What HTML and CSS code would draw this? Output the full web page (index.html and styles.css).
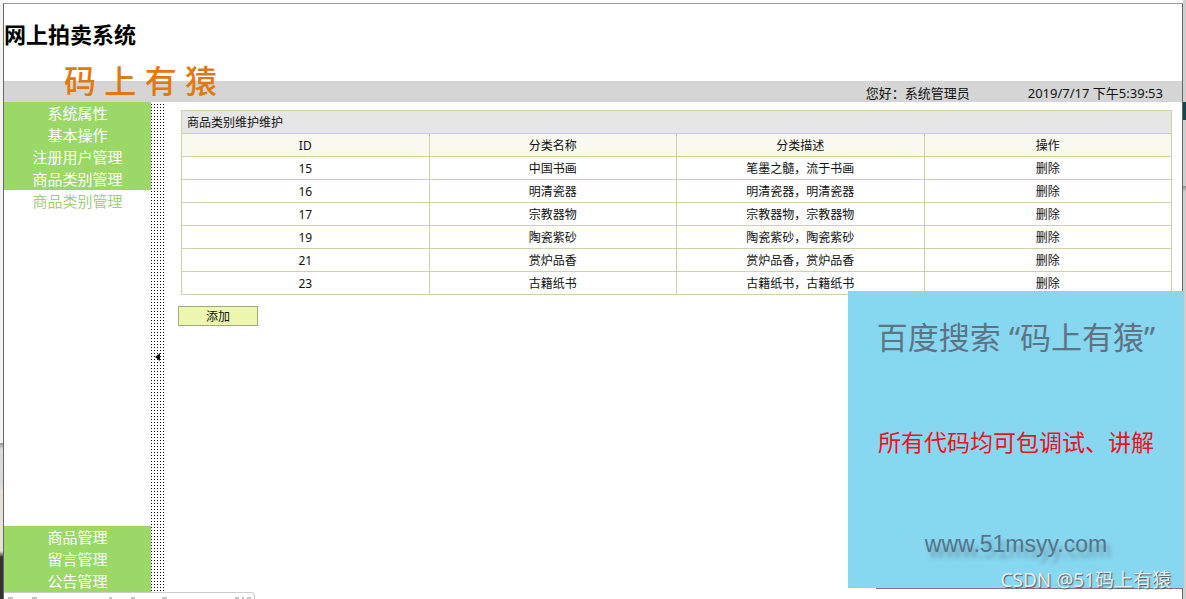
FILE: index.html
```html
<!DOCTYPE html>
<html lang="zh-CN">
<head>
  <meta charset="UTF-8">
  <title>网上拍卖系统</title>
  <link rel="stylesheet" href="styles.css">
</head>
<body>
  <div class="edge edge-left"></div>
  <div class="window">
    <!-- HEADER -->
    <header>
      <h1>网上拍卖系统</h1>
      <div class="info-bar">
        <span>您好：系统管理员</span>
        <span>2019/7/17 下午5:39:53</span>
      </div>
      <div class="brand">码 上 有 猿</div>
    </header>

    <div class="main">
      <!-- SIDE MENU -->
      <nav>
        <a href="#">系统属性</a>
        <a href="#">基本操作</a>
        <a href="#">注册用户管理</a>
        <a href="#">商品类别管理</a>
        <div class="submenu">
          <a href="#">商品类别管理</a>
        </div>
        <a href="#">商品管理</a>
        <a href="#">留言管理</a>
        <a href="#">公告管理</a>
      </nav>
      <div class="splitter">
        <svg width="6" height="8" viewBox="0 0 6 8"><path d="M0 4 L5 0 V8 Z" fill="#111"/></svg>
      </div>

      <!-- CONTENT -->
      <div class="content">
        <table>
          <thead>
            <tr class="table-title"><th colspan="4">商品类别维护维护</th></tr>
            <tr class="table-head"><th>ID</th><th>分类名称</th><th>分类描述</th><th>操作</th></tr>
          </thead>
          <tbody>
            <tr><td>15</td><td>中国书画</td><td>笔墨之髓，流于书画</td><td><a href="#">删除</a></td></tr>
            <tr><td>16</td><td>明清瓷器</td><td>明清瓷器，明清瓷器</td><td><a href="#">删除</a></td></tr>
            <tr><td>17</td><td>宗教器物</td><td>宗教器物，宗教器物</td><td><a href="#">删除</a></td></tr>
            <tr><td>19</td><td>陶瓷紫砂</td><td>陶瓷紫砂，陶瓷紫砂</td><td><a href="#">删除</a></td></tr>
            <tr><td>21</td><td>赏炉品香</td><td>赏炉品香，赏炉品香</td><td><a href="#">删除</a></td></tr>
            <tr><td>23</td><td>古籍纸书</td><td>古籍纸书，古籍纸书</td><td><a href="#">删除</a></td></tr>
          </tbody>
        </table>
        <button class="add" type="button">添加</button>
      </div>
    </div>
    <footer></footer>
  </div>
  <div class="edge edge-right"></div>

  <!-- link preview of the browser -->
  <div class="status">
    <svg width="250" height="6" viewBox="0 0 250 6"><path d="M4 5h5M28 5h5M105 5h3M127 5h4M158 5h5M231 5h4M239 4v2M243 5h4" stroke="#888" fill="none"/></svg>
  </div>

  <aside class="promo">
    <p class="search">百度搜索 “码上有猿”</p>
    <p class="service">所有代码均可包调试、讲解</p>
    <p class="site">www.51msyy.com</p>
  </aside>
  <div class="watermark">CSDN @51码上有猿</div>
</body>
</html>
```

FILE: styles.css
```css
body {
  display: flex;
  position: relative;
  margin: 0;
  height: 100vh;
  overflow: hidden;
  font-family: "Noto Sans", "Noto Sans CJK SC", sans-serif;
  font-size: 12px;
  color: #111;
}

a {
  color: inherit;
  text-decoration: none;
}

.edge {
  width: 3px;
}

.edge-left {
  background: linear-gradient(#f4f4f4 74%, #999 74%, #dcdcdc 75%, #d8d8d8 81%, #e6e2d8 82%, #e6e2d8 92%, #333 93%);
}

.edge-right {
  background: linear-gradient(#cfcfcf 17%, #17454f 17%, #17454f 20%, #cfcfcf 20%, #cfcfcf 31%, #888 31%, #cfcfcf 32%);
}

.window {
  flex: 1;
  display: flex;
  flex-direction: column;
  margin-top: 3px;
  border: 1px solid #666;
  border-top-color: #999;
  border-bottom: none;
  background: #fff;
}

header {
  position: relative;
}

h1 {
  height: 77px;
  margin: 0;
  font-size: 22px;
  line-height: 60px;
  font-weight: bold;
  color: #000;
}

.info-bar {
  display: flex;
  justify-content: flex-end;
  gap: 58px;
  height: 21px;
  padding-right: 19px;
  background: #d5d5d5;
  font-size: 13px;
  line-height: 25px;
}

.brand {
  position: absolute;
  left: 60px;
  bottom: 1px;
  font-size: 32px;
  line-height: 40px;
  font-weight: 500;
  color: #e07a10;
}

.main {
  flex: 1;
  display: flex;
}

nav {
  display: flex;
  flex-direction: column;
  width: 147px;
  background: #9bd868;
  font-size: 15px;
  line-height: 22px;
  text-align: center;
  color: #fff;
}

nav a {
  display: block;
  height: 22px;
}

.submenu {
  flex: 1;
  background: #fff;
  color: #9fcf80;
}

.splitter {
  display: flex;
  align-items: center;
  width: 14px;
  padding-top: 20px;
  box-sizing: border-box;
  background:
    linear-gradient(#fff 2px, transparent 2px) 0 0 / 3px 3px,
    linear-gradient(90deg, #000 1px, #fff 1px) 0 0 / 3px 3px;
}

.splitter svg {
  margin-left: 4px;
}

.content {
  flex: 1;
  padding: 8px 10px 0 13px;
}

table {
  width: calc(100% - 3px);
  margin-left: 3px;
  border-collapse: collapse;
  table-layout: fixed;
}

th, td {
  padding: 2px 0 0;
  border: 1px solid #cdd3a8;
  font-weight: normal;
  line-height: 20px;
  text-align: center;
}

.table-title th {
  padding-left: 5px;
  background: #e6e6e6;
  text-align: left;
}

.table-head th {
  background: #f9f9f0;
}

.add {
  width: 80px;
  height: 20px;
  margin-top: 11px;
  padding: 2px 0 0;
  border: 1px solid #a0a880;
  background: #eef7b0;
  font-family: inherit;
  font-size: 12px;
  line-height: 16px;
  color: #111;
}

footer {
  height: 7px;
}

.status {
  position: absolute;
  left: 4px;
  bottom: 0;
  width: 250px;
  height: 6px;
  border-top: 1px solid #ccc;
  border-right: 1px solid #ccc;
  border-top-right-radius: 4px;
  background: #fff;
}

.status svg {
  display: block;
}

.promo {
  position: absolute;
  right: 2px;
  bottom: 11px;
  display: flex;
  flex-direction: column;
  justify-content: space-between;
  width: 336px;
  height: 297px;
  padding: 26px 0;
  box-sizing: border-box;
  background: #87d7f1;
  text-align: center;
  white-space: nowrap;
}

.promo::after {
  content: "";
  position: absolute;
  top: 100%;
  left: 28px;
  right: 2px;
  border-top: 1px solid #778;
}

.promo p {
  margin: 0;
}

.search {
  font-size: 31px;
  line-height: 40px;
  color: #5d7485;
}

.service {
  font-size: 23px;
  line-height: 36px;
  color: #f01020;
}

.site {
  font-family: "Liberation Sans", sans-serif;
  font-size: 23px;
  line-height: 36px;
  color: #55748a;
  text-shadow: 4px 6px 4px #6f9fb2;
}

.watermark {
  position: absolute;
  right: 15px;
  bottom: 6px;
  font-size: 19px;
  line-height: 26px;
  color: #e4eef2;
  text-shadow: 1px 1px 1px #555;
}
```
